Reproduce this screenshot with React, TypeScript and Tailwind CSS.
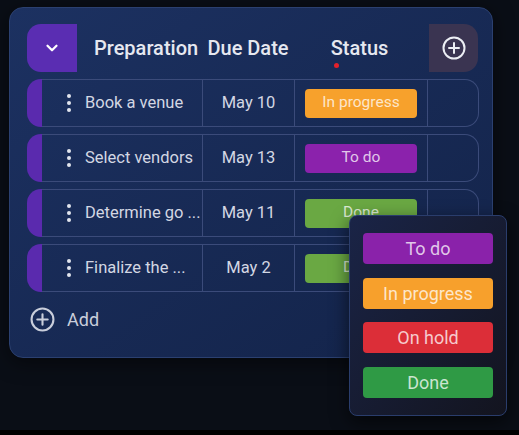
import { ChevronDown } from "lucide-react";

type Status = "To do" | "In progress" | "On hold" | "Done";

const tasks: { name: string; due: string; status: Status }[] = [
  { name: "Book a venue", due: "May 10", status: "In progress" },
  { name: "Select vendors", due: "May 13", status: "To do" },
  { name: "Determine go ...", due: "May 11", status: "Done" },
  { name: "Finalize the ...", due: "May 2", status: "Done" },
];

const pillColor: Record<Status, string> = {
  "To do": "bg-[#8b22ac]",
  "In progress": "bg-[#f7a12c]",
  "On hold": "bg-[#dc2f3a]",
  Done: "bg-[#6aa843]",
};

const menu: { label: Status; color: string }[] = [
  { label: "To do", color: "bg-[#8a22aa]" },
  { label: "In progress", color: "bg-[#f7a02c]" },
  { label: "On hold", color: "bg-[#dc2e38]" },
  { label: "Done", color: "bg-[#2f9a45]" },
];

function CirclePlus({ size }: { size: number }) {
  return (
    <svg width={size} height={size} viewBox="0 0 24 24" fill="none" stroke="currentColor" strokeWidth={2} strokeLinecap="round">
      <circle cx="12" cy="12" r="10.5" />
      <path d="M12 7v10M7 12h10" />
    </svg>
  );
}

function Kebab() {
  return (
    <div className="flex flex-col gap-[3px]">
      <span className="w-[4px] h-[4px] rounded-full bg-[#e2e5ee]" />
      <span className="w-[4px] h-[4px] rounded-full bg-[#e2e5ee]" />
      <span className="w-[4px] h-[4px] rounded-full bg-[#e2e5ee]" />
    </div>
  );
}

export default function App() {
  return (
    <div className="relative w-[519px] h-[435px] overflow-hidden bg-[#0a0e16] font-['Roboto',sans-serif]">
      {/* Board panel */}
      <div className="ml-[9px] mt-[7px] w-[484px] h-[351px] rounded-[14px] border border-[#2b4070] bg-gradient-to-br from-[#1c3161] to-[#132349] pl-[17px] pr-[13px] pt-[16px] shadow-[0_4px_20px_rgba(0,0,0,0.5)]">
        {/* Header */}
        <div className="flex h-[48px] items-stretch text-[20px] font-medium text-[#e6e8f0]">
          <div className="w-[50px] rounded-l-[14px] bg-[#5a2db2] flex items-center justify-center text-white">
            <ChevronDown size={18} strokeWidth={3} />
          </div>
          <div className="w-[127px] pl-[17px] flex items-center whitespace-nowrap">Preparation</div>
          <div className="w-[92px] pr-[4px] flex items-center justify-center whitespace-nowrap">Due Date</div>
          <div className="relative w-[133px] pr-[6px] flex items-center justify-center">
            Status
            <span className="absolute left-[38px] top-[39px] w-[5px] h-[5px] rounded-full bg-[#e3202b]" />
          </div>
          <div className="w-[49px] rounded-r-[14px] bg-[#3a3451] flex items-center justify-center text-[#eceef4]">
            <CirclePlus size={24} />
          </div>
        </div>

        {/* Rows */}
        <div className="mt-[7px] flex flex-col gap-[7px]">
          {tasks.map((t) => (
            <div key={t.name} className="flex h-[48px]">
              <div className="w-[15px] rounded-l-[14px] bg-[#5a2aae]" />
              <div className="flex flex-1 border-y border-r border-[#3b4b7a] rounded-r-[14px] text-[16.5px] text-[#d3d7e3]">
                <div className="w-[161px] border-r border-[#3b4b7a] flex items-center pl-[25px] gap-[14px]">
                  <Kebab />
                  <span className="whitespace-nowrap">{t.name}</span>
                </div>
                <div className="w-[92px] border-r border-[#3b4b7a] flex items-center justify-center">
                  {t.due}
                </div>
                <div className="w-[133px] border-r border-[#3b4b7a] flex items-center pl-[10px]">
                  <div className={`w-[112px] h-[29px] rounded-[4px] ${pillColor[t.status]} flex items-center justify-center text-[15.5px] text-white/75`}>
                    {t.status}
                  </div>
                </div>
                <div className="flex-1" />
              </div>
            </div>
          ))}
        </div>

        {/* Add */}
        <div className="mt-[14px] flex items-center gap-[12px] pl-[3px] text-[18px] text-[#c9cedb]">
          <CirclePlus size={25} />
          <span>Add</span>
        </div>
      </div>

      {/* Status dropdown */}
      <div className="absolute left-[349px] top-[215px] w-[158px] h-[201px] rounded-[8px] border border-[#2a3d6c] bg-gradient-to-br from-[#1a2447] to-[#13141f] shadow-[0_6px_18px_rgba(0,0,0,0.6)] pl-[13px] pt-[17px] flex flex-col gap-[13.5px]">
        {menu.map((m) => (
          <div key={m.label} className={`w-[130px] h-[31px] rounded-[4px] ${m.color} flex items-center justify-center text-[18px] text-white/75`}>
            {m.label}
          </div>
        ))}
      </div>

      <div className="absolute left-0 bottom-0 w-full h-[5px] bg-black" />
    </div>
  );
}
